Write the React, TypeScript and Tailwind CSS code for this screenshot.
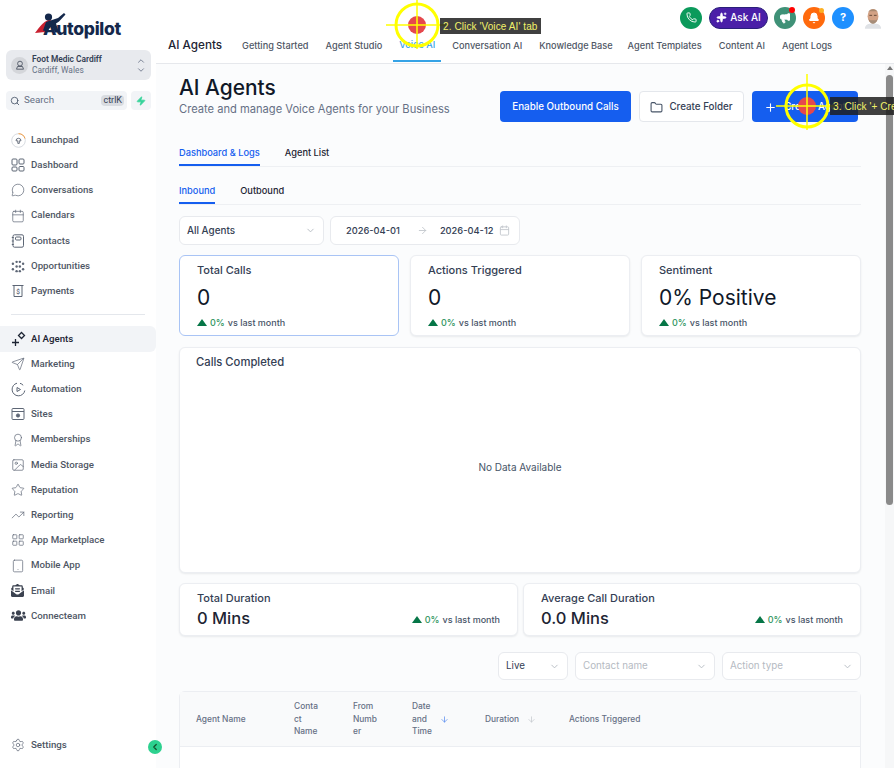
import React from "react";
import {
  MessageCircle, Calendar, Send, Star, TrendingUp, Settings, Search, ChevronDown, ChevronUp, ChevronLeft,
  Phone, Sparkles, Megaphone, Bell, Folder, Plus, ArrowRight, ArrowDown, Image, Award, Tablet, LayoutGrid, Zap,
} from "lucide-react";
import { FaUsers, FaEnvelopeOpenText } from "react-icons/fa";

const G = "#5d6675";

const Launch = () => (
  <svg width="15" height="15" viewBox="0 0 15 15" fill="none">
    <circle cx="7.5" cy="7.5" r="6.8" stroke="#d7dbe0" />
    <path d="M7.5.7a6.8 6.8 0 0 1 6.5 4.8" stroke="#f59e42" />
    <path d="M5 7.8a2.500 2.500 0 1 1 5 0H8.300v2.600H6.800V7.800z" stroke={G} strokeWidth=".9" />
  </svg>
);
const Dash = () => (
  <svg width="14" height="14" viewBox="0 0 14 14" fill="none" stroke={G}>
    <rect x="1" y="1" width="5" height="6" rx="1" /><rect x="8" y="1" width="5" height="5" rx="1" />
    <rect x="1" y="9" width="5" height="4" rx="1" /><rect x="8" y="8.500" width="5" height="4.500" rx="1" />
  </svg>
);
const Contact = () => (
  <svg width="14" height="14" viewBox="0 0 14 14" fill="none" stroke={G}>
    <rect x="2" y=".8" width="10.500" height="12.400" rx="1.500" /><rect x="4.500" y="3" width="5.500" height="3" rx="1" />
    <path d="M.8 3.500h2M.8 7h2M.8 10.500h2" />
  </svg>
);
const Opp = () => (
  <svg width="14" height="13" viewBox="0 0 15 14" fill={G}>
    {[[2, 4], [2, 10], [6, 2], [6, 7], [6, 12], [9.5, 2], [9.5, 7], [9.5, 12], [13, 4], [13, 10]].map(([x, y], i) => (
      <circle key={i} cx={x} cy={y} r="1.300" />
    ))}
  </svg>
);
const Pay = () => (
  <svg width="14" height="14" viewBox="0 0 14 14" fill="none" stroke={G}>
    <path d="M1.500 1.500h11M3 1.500v11h8v-11" /><text x="5.200" y="10" fontSize="6.500" fill={G} stroke="none" fontFamily="Roboto, sans-serif">$</text>
  </svg>
);
const Auto = () => (
  <svg width="15" height="15" viewBox="0 0 15 15" fill="none" stroke={G}>
    <path d="M6 1.200A6.400 6.400 0 1 0 13.800 8.500M9 1.300a6.400 6.400 0 0 1 3.200 2" /><path d="M6 5.500l3.500 2-3.500 2z" />
  </svg>
);
const Site = () => (
  <svg width="14" height="14" viewBox="0 0 14 14" fill="none" stroke={G}>
    <rect x="1" y="1.500" width="12" height="11" rx="1" /><path d="M1 4.500h12" /><circle cx="7" cy="8.500" r="1.600" fill={G} />
  </svg>
);
const Sparkle = () => (
  <svg width="16" height="16" viewBox="0 0 16 16" fill="none" stroke="#1d2433" strokeWidth="1.300">
    <path d="M10.500 1.500l3 3-3 3-3-3z" /><path d="M4.500 8v7M1 11.500h7" />
  </svg>
);
const Logo = () => (
  <div className="relative flex h-[49px] items-end justify-center pb-[10px] pl-[8px]">
    <svg className="absolute left-[34px] top-[11px]" width="36" height="24" viewBox="0 0 36 24">
      <path d="M17 8C11 9 6 15 1 22l10-1 5-6z" fill="#c8202f" />
      <circle cx="14.500" cy="6" r="3.600" fill="#14284b" />
      <path d="M12 11l6-2 6-2 6-5 1.500 1.500-6.500 7-3 2 3 9h-4l-3-7-5 6-4-1z" fill="#14284b" />
    </svg>
    <span className="relative font-['Inter',sans-serif] text-[17.5px] font-extrabold leading-[20px] tracking-[-0.3px] text-[#14284b]">Autopilot</span>
  </div>
);

const nav1: [string, React.ReactNode][] = [
  ["Launchpad", <Launch />],
  ["Dashboard", <Dash />],
  ["Conversations", <MessageCircle size={14} color={G} strokeWidth={1.2} />],
  ["Calendars", <Calendar size={14} color={G} strokeWidth={1.2} />],
  ["Contacts", <Contact />],
  ["Opportunities", <Opp />],
  ["Payments", <Pay />],
];
const nav2: [string, React.ReactNode][] = [
  ["Marketing", <Send size={14} color={G} strokeWidth={1.2} />],
  ["Automation", <Auto />],
  ["Sites", <Site />],
  ["Memberships", <Award size={14} color={G} strokeWidth={1.2} />],
  ["Media Storage", <Image size={14} color={G} strokeWidth={1.2} />],
  ["Reputation", <Star size={14} color={G} strokeWidth={1.2} />],
  ["Reporting", <TrendingUp size={14} color={G} strokeWidth={1.2} />],
  ["App Marketplace", <LayoutGrid size={14} color={G} strokeWidth={1.2} />],
  ["Mobile App", <Tablet size={14} color={G} strokeWidth={1.2} />],
  ["Email", <FaEnvelopeOpenText size={13} color="#3b4250" />],
  ["Connecteam", <FaUsers size={15} color="#3b4250" />],
];

const NavRow = ({ label, icon, active }: { label: string; icon: React.ReactNode; active?: boolean }) => (
  <div className={`flex h-[25.2px] items-center rounded-r-md pl-[11px] text-[9.7px] font-medium ${active ? "bg-[#f2f4f7] text-[#1d2433]" : "text-[#4f5765]"}`}>
    <span className="flex w-[20px] shrink-0 items-center">{icon}</span>
    {label}
  </div>
);

const Sidebar = () => (
  <aside className="relative flex h-[768px] w-[156px] shrink-0 flex-col bg-white font-['Roboto',sans-serif]">
    <Logo />
    <div className="ml-[6px] mt-px flex h-[30px] w-[145px] items-center rounded-md bg-[#e8eaee] pl-[5px] pr-[5px]">
      <span className="flex h-[17px] w-[17px] items-center justify-center rounded-full bg-[#d4d6da]">
        <svg width="10" height="10" viewBox="0 0 10 10" fill="none" stroke="#4f5765" strokeWidth=".9"><circle cx="5" cy="3.600" r="2.400" /><path d="M1.500 9.200h7L7.500 6.500h-5z" /></svg>
      </span>
      <div className="ml-[4px] flex-1 leading-[11px]">
        <div className="text-[8.4px] font-semibold text-[#344054]">Foot Medic Cardiff</div>
        <div className="text-[8.4px] text-[#667085]">Cardiff, Wales</div>
      </div>
      <div className="flex flex-col text-[#667085]">
        <ChevronUp size={10} className="-mb-[1px]" /><ChevronDown size={10} />
      </div>
    </div>
    <div className="ml-[6px] mt-[11px] flex w-[145px] gap-[4px]">
      <div className="flex h-[19px] w-[121px] items-center rounded bg-[#f2f4f7] pl-[4px] pr-[3px] text-[9.8px] text-[#667085]">
        <Search size={10} color="#475467" />
        <span className="ml-[4px] flex-1">Search</span>
        <span className="rounded-sm bg-[#d9dce1] px-[2px] text-[9px] leading-[11px] text-[#344054]">ctrlK</span>
      </div>
      <div className="flex h-[19px] w-[20px] items-center justify-center rounded bg-[#f2f4f7]">
        <Zap size={10} fill="#34d399" color="#34d399" />
      </div>
    </div>
    <div className="mt-[17.5px]">
      {nav1.map(([l, i]) => <NavRow key={l} label={l} icon={i} />)}
    </div>
    <div className="ml-[11px] mt-[10.5px] h-px w-[134px] bg-[#e4e7ec]" />
    <div className="mt-[11px]">
      <NavRow label="AI Agents" icon={<Sparkle />} active />
      {nav2.map(([l, i]) => <NavRow key={l} label={l} icon={i} />)}
    </div>
    <div className="mt-auto mb-[10px]">
      <NavRow label="Settings" icon={<Settings size={14} color={G} strokeWidth={1.2} />} />
    </div>
    <span className="absolute left-[148px] top-[740px] z-10 flex h-[14px] w-[14px] items-center justify-center rounded-full bg-[#2dd18f]">
      <ChevronLeft size={10} color="#14532d" strokeWidth={3} />
    </span>
  </aside>
);

const tabs = ["Getting Started", "Agent Studio", "Voice AI", "Conversation AI", "Knowledge Base", "Agent Templates", "Content AI", "Agent Logs"];

const Avatar = () => (
  <svg width="19" height="24" viewBox="0 0 20 24">
    <path d="M1 24c0-5 4-6 9-6s9 1 9 6z" fill="#dfe2e6" />
    <ellipse cx="10" cy="10" rx="6" ry="8" fill="#d2a184" />
    <path d="M4.500 6C6 1 14 1 15.500 6L14 4.500H6z" fill="#a9896f" />
    <path d="M5 13c1.500 7 8.500 7 10 0l-2 1.500h-6z" fill="#a58d79" />
    <rect x="6" y="8.500" width="3" height="1" fill="#5b4030" /><rect x="11" y="8.500" width="3" height="1" fill="#5b4030" />
  </svg>
);

const Header = () => (
  <header className="relative h-[64px] shrink-0 border-b border-[#e6e8ec] bg-white font-['Inter',sans-serif]">
    <div className="flex h-[33px] items-center justify-end pr-[12px] pt-[2px]">
      <span className="flex h-[22px] w-[22px] items-center justify-center rounded-full bg-[#0b9a5b]"><Phone size={11} color="#fff" /></span>
      <span className="ml-[7px] flex h-[22px] w-[59px] items-center justify-center gap-[3px] rounded-full border border-[#2a1f7a] bg-[#4a1fa8] text-[10px] font-medium text-white"><Sparkles size={11} fill="#fff" />Ask AI</span>
      <span className="relative ml-[6px] flex h-[22px] w-[22px] items-center justify-center rounded-full bg-[#3f9177]">
        <Megaphone size={12} color="#fff" fill="#fff" />
        <span className="absolute right-[1px] top-0 h-[6px] w-[6px] rounded-full bg-[#f00]" />
      </span>
      <span className="relative ml-[7px] flex h-[22px] w-[22px] items-center justify-center rounded-full bg-[#ff6a0d]">
        <Bell size={12} color="#fff" fill="#fff" />
        <span className="absolute right-[1px] top-[1px] h-[5px] w-[5px] rounded-full bg-[#fdb022]" />
      </span>
      <span className="ml-[7px] flex h-[22px] w-[22px] items-center justify-center rounded-full bg-[#1e90ff] text-[11px] font-bold text-white">?</span>
      <span className="ml-[10px] flex w-[18px]"><Avatar /></span>
    </div>
    <div className="flex h-[28.5px] items-stretch whitespace-nowrap pl-[12px]">
      <span className="mr-[20px] flex items-center pb-[3px] text-[11.7px] font-medium text-[#1d2433]">AI Agents</span>
      {tabs.map((t) => (
        <span key={t} className={`flex items-center pb-[2px] text-[9.2px] font-medium ${t === "Voice AI" ? "-ml-[6px] mr-[11px] border-b-2 border-[#36a3e6] px-[6px] text-[#36a3e6]" : t === "Knowledge Base" ? "mr-[15px] text-[#4f5765]" : "mr-[17px] text-[#4f5765]"}`}>{t}</span>
      ))}
    </div>
  </header>
);

const Up = () => (
  <svg width="10" height="7" viewBox="0 0 10 7" className="shrink-0"><path d="M5 0l5 7H0z" fill="#067647" /></svg>
);
const Delta = () => (
  <div className="flex items-center gap-[3px] whitespace-nowrap text-[9px] font-medium text-[#475467]">
    <Up /><span className="text-[#2f9560]">0%</span><span>vs last month</span>
  </div>
);
const Card = ({ title, value, active }: { title: string; value: string; active?: boolean }) => (
  <div className={`h-[81px] flex-1 rounded-md border bg-white pl-[17px] pt-[7px] ${active ? "border-[#a9c4f5]" : "border-[#eceef2] shadow-[0_1px_2px_rgba(16,24,40,0.08)]"}`}>
    <div className="text-[11px] font-medium leading-[15px] text-[#344054]">{title}</div>
    <div className="mt-[7px] text-[21px] font-normal leading-[26px] text-[#101828]">{value}</div>
    <div className="mt-[5px]"><Delta /></div>
  </div>
);
const Dur = ({ title, value, w }: { title: string; value: string; w: string }) => (
  <div className={`flex h-[53px] items-end justify-between rounded-md border border-[#eceef2] bg-white px-[17px] pb-[6px] shadow-[0_1px_2px_rgba(16,24,40,0.08)] ${w}`}>
    <div>
      <div className="text-[11px] font-medium leading-[15px] text-[#344054]">{title}</div>
      <div className="mt-[1px] text-[16.5px] font-medium leading-[22px] text-[#1d2433]">{value}</div>
    </div>
    <div className="pb-[3px]"><Delta /></div>
  </div>
);
const Sel = ({ label, w, ph }: { label: string; w: string; ph?: boolean }) => (
  <div className={`flex h-[28px] items-center justify-between whitespace-nowrap rounded-md border border-[#e8eaee] bg-white pl-[7px] pr-[7px] pt-px text-[9.8px] ${ph ? "text-[#b5bac2]" : "text-[#344054]"} ${w}`}>
    {label}<ChevronDown size={11} color="#b5bac2" />
  </div>
);
const Th = ({ w, children, sort }: { w: string; children: React.ReactNode; sort?: string }) => (
  <div className={`flex items-center text-[8.4px] font-medium leading-[12.6px] text-[#667085] ${w}`}>
    <span className="break-words">{children}</span>
    {sort && <ArrowDown size={9} color={sort} className="ml-[8px] shrink-0" />}
  </div>
);

const Content = () => (
  <div className="flex min-h-0 flex-1 font-['Inter',sans-serif]">
    <main className="min-w-0 flex-1 overflow-hidden bg-[#fbfcfd] pl-[23px] pr-[24px]">
      <div className="flex h-[59px] items-start justify-between pt-[10px]">
        <div>
          <h1 className="text-[20.9px] font-medium leading-[27px] text-[#101828]">AI Agents</h1>
          <p className="mt-px whitespace-nowrap text-[11.15px] leading-[14px] text-[#667085]">Create and manage Voice Agents for your Business</p>
        </div>
        <div className="mr-[3px] mt-[17px] flex gap-[8px] whitespace-nowrap text-[9.8px] font-medium">
          <span className="flex h-[31px] w-[131px] items-center justify-center rounded bg-[#155eef] pt-px text-white">Enable Outbound Calls</span>
          <span className="flex h-[31px] w-[105px] items-center justify-center gap-[6px] rounded border border-[#e4e7ec] bg-white pt-px text-[#344054]"><Folder size={13} color="#475467" />Create Folder</span>
          <span className="flex h-[31px] w-[106px] items-center justify-center gap-[7px] rounded bg-[#155eef] pt-px text-white"><Plus size={13} />Create Agent</span>
        </div>
      </div>
      <div className="flex h-[44px] items-end gap-[25px] whitespace-nowrap border-b border-[#eef0f3] text-[9.25px] font-medium leading-[14px]">
        <span className="border-b-2 border-[#155eef] pb-[4px] text-[#155eef]">Dashboard &amp; Logs</span>
        <span className="border-b-2 border-transparent pb-[4px] text-[#1d2433]">Agent List</span>
      </div>
      <div className="flex h-[38px] items-end gap-[25px] whitespace-nowrap border-b border-[#eef0f3] text-[9.25px] font-medium leading-[14px]">
        <span className="border-b-2 border-[#155eef] pb-[4.5px] text-[#155eef]">Inbound</span>
        <span className="border-b-2 border-transparent pb-[4.5px] text-[#1d2433]">Outbound</span>
      </div>
      <div className="mt-[11px] flex gap-[6px]">
        <div className="flex h-[29px] w-[145px] items-center justify-between rounded-md border border-[#e8eaee] bg-white pl-[7px] pr-[7px] text-[9.9px] font-medium text-[#344054]">
          All Agents<ChevronDown size={11} color="#b5bac2" />
        </div>
        <div className="flex h-[29px] w-[190px] items-center whitespace-nowrap rounded-md border border-[#e8eaee] bg-white pl-[15px] pr-[9px] text-[9.3px] font-medium text-[#344054]">
          <span>2026-04-01</span>
          <ArrowRight size={11} color="#c4c8ce" className="ml-[17px] mr-[12px]" />
          <span>2026-04-12</span>
          <Calendar size={11} color="#c4c8ce" className="ml-auto" />
        </div>
      </div>
      <div className="mt-[10px] flex gap-[11px]">
        <Card title="Total Calls" value="0" active />
        <Card title="Actions Triggered" value="0" />
        <Card title="Sentiment" value="0% Positive" />
      </div>
      <div className="mt-[11px] h-[226px] rounded-md border border-[#eceef2] bg-white shadow-[0_1px_2px_rgba(16,24,40,0.08)]">
        <div className="pl-[16px] pt-[6px] text-[11.25px] font-medium text-[#344054]">Calls Completed</div>
        <div className="mt-[89px] text-center text-[10px] text-[#475467]">No Data Available</div>
      </div>
      <div className="mt-[10px] flex justify-between">
        <Dur title="Total Duration" value="0 Mins" w="w-[339px]" />
        <Dur title="Average Call Duration" value="0.0 Mins" w="w-[338px]" />
      </div>
      <div className="mt-[16px] flex justify-end gap-[7px]">
        <Sel label="Live" w="w-[70px]" />
        <Sel label="Contact name" w="w-[140px]" ph />
        <Sel label="Action type" w="w-[139px]" ph />
      </div>
      <div className="mt-[11px] h-[90px] rounded-t-md border border-[#eceef2] bg-white">
        <div className="flex h-[55px] items-center border-b border-[#eceef2] bg-[#f9fafb] pl-[16px]">
          <Th w="w-[98px]">Agent Name</Th>
          <Th w="w-[59px]">Conta<br />ct<br />Name</Th>
          <Th w="w-[59px]">From<br />Numb<br />er</Th>
          <Th w="w-[73px]" sort="#5b8def">Date<br />and<br />Time</Th>
          <Th w="w-[84px]" sort="#c4c8ce">Duration</Th>
          <Th w="w-[120px]">Actions Triggered</Th>
        </div>
      </div>
    </main>
    <div className="relative w-[9px] shrink-0 bg-[#f6f7f8]">
      <div className="mx-auto mt-[2px] h-0 w-0 border-x-[3px] border-b-[4px] border-x-transparent border-b-[#777]" />
      <div className="mx-auto mt-[5px] h-[430px] w-[7px] rounded-sm bg-[#8a8a8a]" />
    </div>
  </div>
);

const Target = ({ left, top }: { left: number; top: number }) => (
  <svg className="pointer-events-none absolute z-20" style={{ left, top }} width="64" height="64" viewBox="0 0 64 64" fill="none">
    <circle cx="32" cy="32" r="9" fill="#e5484d" />
    <circle cx="32" cy="32" r="21" stroke="#ffff00" strokeWidth="3" />
    <path d="M1 32h62M32 0v56" stroke="#ffff00" strokeWidth="1.5" />
  </svg>
);
const Label = ({ left, top, w, h, children }: { left: number; top: number; w: number; h: number; children: string }) => (
  <div className="absolute z-20 flex items-center overflow-hidden whitespace-nowrap bg-[rgba(30,30,30,0.85)] pl-[3px] font-['Liberation_Sans',sans-serif] text-[10px] tracking-[0.1px] text-[#f2f26a]" style={{ left, top, width: w, height: h }}>
    {children}
  </div>
);

export default function App() {
  return (
    <div className="relative flex h-[768px] w-[894px] overflow-hidden bg-white">
      <Sidebar />
      <div className="flex min-w-0 flex-1 flex-col">
        <Header />
        <Content />
      </div>
      <Target left={385} top={-7} />
      <Label left={440} top={18} w={101} h={16}>2. Click 'Voice AI' tab</Label>
      <Target left={775} top={74} />
      <Label left={830} top={97} w={64} h={18}>3. Click '+ Cre</Label>
    </div>
  );
}
